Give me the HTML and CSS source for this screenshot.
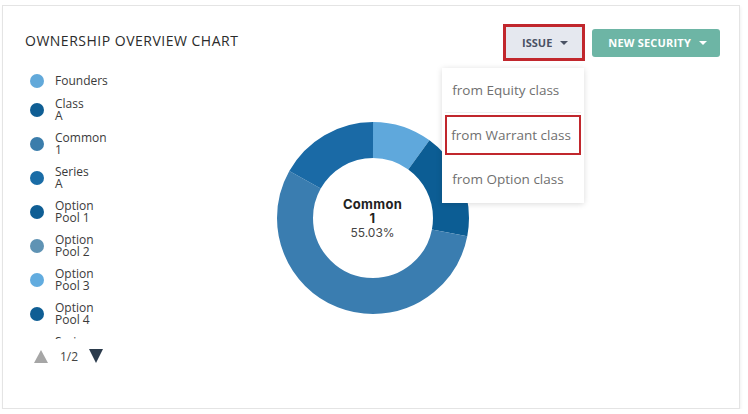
FILE: index.html
```html
<!DOCTYPE html>
<html lang="en">
<head>
  <meta charset="UTF-8" />
  <meta name="viewport" content="width=device-width, initial-scale=1.0" />
  <title>Ownership Overview</title>
  <link rel="stylesheet" href="styles.css">
</head>
<body>
  <div class="card">
    <div class="card-header">
      <h2 class="card-title">Ownership Overview Chart</h2>
      <div class="actions">
        <div class="issue-wrap">
          <button class="btn btn-issue">Issue <span class="caret"></span></button>
          <div class="dropdown">
            <a href="#" class="dd-item">from Equity class</a>
            <a href="#" class="dd-item marked">from Warrant class</a>
            <a href="#" class="dd-item">from Option class</a>
          </div>
        </div>
        <button class="btn btn-new">New Security <span class="caret"></span></button>
      </div>
    </div>

    <div class="card-body">
      <div class="legend-col">
        <ul class="legend">
          <li><span class="dot" style="background:#62a9da"></span><span>Founders</span></li>
          <li><span class="dot" style="background:#0f5e94"></span><span>Class<br>A</span></li>
          <li><span class="dot" style="background:#3b7dab"></span><span>Common<br>1</span></li>
          <li><span class="dot" style="background:#1a6ca6"></span><span>Series<br>A</span></li>
          <li><span class="dot" style="background:#0f5e94"></span><span>Option<br>Pool 1</span></li>
          <li><span class="dot" style="background:#5f93b4"></span><span>Option<br>Pool 2</span></li>
          <li><span class="dot" style="background:#62acdf"></span><span>Option<br>Pool 3</span></li>
          <li><span class="dot" style="background:#0f5e94"></span><span>Option<br>Pool 4</span></li>
          <li><span class="dot" style="background:#1a6ca6"></span><span>Series<br>B</span></li>
        </ul>
        <div class="pager">
          <span class="tri-up"></span>
          <span class="page-no">1/2</span>
          <span class="tri-down"></span>
        </div>
      </div>

      <div class="chart">
        <svg width="192" height="192" viewBox="0 0 192 192">
          <g transform="rotate(-90 96 96)" fill="none" stroke-width="36">
            <!-- circumference 2*pi*78 = 490.09 -->
            <circle cx="96" cy="96" r="78" stroke="#5fa8dc" stroke-dasharray="49.0 441.09" stroke-dashoffset="0"/>
            <circle cx="96" cy="96" r="78" stroke="#0c5d94" stroke-dasharray="88.2 401.89" stroke-dashoffset="-49.0"/>
            <circle cx="96" cy="96" r="78" stroke="#3a7db0" stroke-dasharray="269.7 220.39" stroke-dashoffset="-137.2"/>
            <circle cx="96" cy="96" r="78" stroke="#1a6aa6" stroke-dasharray="83.2 406.89" stroke-dashoffset="-406.9"/>
          </g>
        </svg>
        <div class="chart-label">
          <strong>Common<br>1</strong>
          <span>55.03%</span>
        </div>
      </div>

      <div></div>
    </div>
  </div>
</body>
</html>
```

FILE: styles.css
```css
body {
  margin: 0;
  background: #fff;
  font-family: 'Open Sans', sans-serif;
  color: #333;
}
.card {
  box-sizing: border-box;
  width: 738px;
  height: 404px;
  margin: 5px 0 0 2px;
  padding: 18px 19px 0 22px;
  border: 1px solid #e4e4e4;
  box-shadow: 1px 2px 3px rgba(0, 0, 0, 0.06);
  background: #fff;
}
.card-header {
  display: flex;
  justify-content: space-between;
  align-items: flex-start;
}
.card-title {
  margin: 7px 0 0;
  font-size: 14px;
  font-weight: 400;
  text-transform: uppercase;
  letter-spacing: 0.5px;
  color: #2b2b2b;
}
.actions {
  display: flex;
  align-items: center;
  gap: 7px;
}
.issue-wrap {
  position: relative;
}
.btn {
  font-family: 'Open Sans', sans-serif;
  font-size: 11px;
  font-weight: 700;
  text-transform: uppercase;
  border-radius: 3px;
  cursor: pointer;
  display: flex;
  align-items: center;
  gap: 8px;
}
.btn-issue {
  height: 37px;
  padding: 0 14px 0 16px;
  background: #e5e8ef;
  color: #4a5264;
  border: 3px solid #c1272d;
  border-radius: 0;
}
.btn-new {
  height: 28px;
  padding: 0 13px 0 16px;
  background: #6db5a5;
  color: #fff;
  border: none;
  letter-spacing: 0.2px;
}
.caret {
  width: 0;
  height: 0;
  border-left: 4px solid transparent;
  border-right: 4px solid transparent;
  border-top: 4px solid currentColor;
}
.dropdown {
  position: absolute;
  top: 44px;
  right: 1px;
  width: 142px;
  background: #fff;
  box-shadow: 0 1px 6px rgba(0, 0, 0, 0.15);
  display: flex;
  flex-direction: column;
  padding: 0 3px 2px;
  box-sizing: border-box;
  z-index: 10;
}
.dd-item {
  height: 44px;
  display: flex;
  align-items: center;
  padding-left: 7px;
  font-size: 13.5px;
  color: #707070;
  text-decoration: none;
  border-bottom: 1px solid #f0f0f0;
}
.dd-item:last-child {
  border-bottom: none;
}
.dd-item.marked {
  height: 40px;
  margin: 2px 0 2px;
  padding-left: 4px;
  border: 2px solid #c1272d;
  box-sizing: border-box;
}
.card-body {
  display: grid;
  grid-template-columns: 1fr auto 1fr;
  margin-top: 13px;
}
.legend-col {
  padding-left: 5px;
}
.legend {
  list-style: none;
  margin: 0;
  padding: 0;
  height: 265px;
  overflow: hidden;
  display: flex;
  flex-direction: column;
  gap: 10px;
}
.legend li {
  display: flex;
  align-items: center;
  gap: 11px;
  font-size: 12px;
  line-height: 12px;
  color: #3a3a3a;
}
.dot {
  width: 14px;
  height: 14px;
  border-radius: 50%;
  flex: none;
}
.pager {
  display: flex;
  align-items: center;
  margin-top: 10px;
  padding-left: 4px;
  height: 14px;
}
.tri-up {
  width: 0;
  height: 0;
  border-left: 7px solid transparent;
  border-right: 7px solid transparent;
  border-bottom: 13px solid #a6a6a6;
}
.page-no {
  font-size: 12px;
  color: #444;
  margin: 0 11px 0 12px;
}
.tri-down {
  width: 0;
  height: 0;
  border-left: 7px solid transparent;
  border-right: 7px solid transparent;
  border-top: 14px solid #2b3b4c;
}
.chart {
  position: relative;
  width: 192px;
  height: 192px;
  margin-top: 48px;
}
.chart svg {
  display: block;
}
.chart-label {
  position: absolute;
  inset: 0;
  display: flex;
  flex-direction: column;
  align-items: center;
  justify-content: center;
  font-family: 'Inter', sans-serif;
  text-align: center;
  color: #222;
}
.chart-label strong {
  font-size: 13px;
  line-height: 14px;
  font-weight: 700;
  letter-spacing: 0.3px;
}
.chart-label span {
  font-size: 12px;
  line-height: 15px;
  color: #444;
}
```
